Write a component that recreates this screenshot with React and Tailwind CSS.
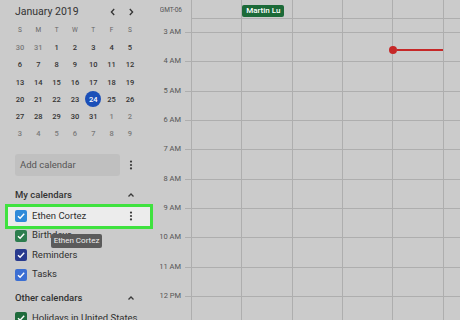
import React from 'react';

const font = { fontFamily: 'Roboto, "Noto Sans", sans-serif' };

const weeks = [
  [['30', 1], ['31', 1], ['1'], ['2'], ['3'], ['4'], ['5']],
  [['6'], ['7'], ['8'], ['9'], ['10'], ['11'], ['12']],
  [['13'], ['14'], ['15'], ['16'], ['17'], ['18'], ['19']],
  [['20'], ['21'], ['22'], ['23'], ['24', 0, 1], ['25'], ['26']],
  [['27'], ['28'], ['29'], ['30'], ['31'], ['1', 1], ['2', 1]],
  [['3', 1], ['4', 1], ['5', 1], ['6', 1], ['7', 1], ['8', 1], ['9', 1]],
];

const hours = ['3 AM', '4 AM', '5 AM', '6 AM', '7 AM', '8 AM', '9 AM', '10 AM', '11 AM', '12 PM', ''];

function Kebab() {
  return (
    <svg width="10" height="10" viewBox="0 0 10 10" className="text-[#3a3a3a]">
      <circle cx="5" cy="1.6" r="1.1" fill="currentColor" />
      <circle cx="5" cy="5" r="1.1" fill="currentColor" />
      <circle cx="5" cy="8.4" r="1.1" fill="currentColor" />
    </svg>
  );
}

function ChevronUp() {
  return (
    <svg width="10" height="10" viewBox="0 0 10 10">
      <path d="M2.5 6.5 L5 4 L7.5 6.5" fill="none" stroke="#3a3a3a" strokeWidth="1.3" />
    </svg>
  );
}

function Check({ color }) {
  return (
    <div className={`w-[12px] h-[12px] shrink-0 rounded-[2px] flex items-center justify-center ${color}`}>
      <svg width="10" height="10" viewBox="0 0 10 10">
        <path d="M2 5.2 L4.1 7.2 L8.2 2.8" fill="none" stroke="white" strokeWidth="1.4" />
      </svg>
    </div>
  );
}

function CalRow({ color, label, className = '', children }) {
  return (
    <div className={`relative h-[19.5px] shrink-0 flex items-center ml-[15px] w-[121px] justify-between ${className}`}>
      {children}
      <div className="relative flex items-center gap-[5px]">
        <Check color={color} />
        <span className="text-[9.5px] text-[#2f2f2f] whitespace-nowrap">{label}</span>
      </div>
    </div>
  );
}

function Sidebar() {
  return (
    <div className="w-[160px] shrink-0 flex flex-col">
      <div className="h-[22px] shrink-0 flex items-center pl-[15px] pt-[1px]">
        <span className="text-[10.5px] text-[#333]">January 2019</span>
        <div className="ml-auto mr-[24px] flex gap-[8px]">
          <svg width="10" height="10" viewBox="0 0 10 10">
            <path d="M6.2 2 L3.4 5 L6.2 8" fill="none" stroke="#333" strokeWidth="1.3" />
          </svg>
          <svg width="10" height="10" viewBox="0 0 10 10">
            <path d="M3.8 2 L6.6 5 L3.8 8" fill="none" stroke="#333" strokeWidth="1.3" />
          </svg>
        </div>
      </div>
      <div className="shrink-0 ml-[10.8px] w-[128.3px] grid grid-cols-7">
        {['S', 'M', 'T', 'W', 'T', 'F', 'S'].map((d, i) => (
          <div key={i} className="h-[17.2px] flex items-center justify-center text-[6.5px] text-[#666]">
            {d}
          </div>
        ))}
        {weeks.flat().map(([n, dim, today], i) => (
          <div key={i} className="h-[17.2px] flex items-center justify-center">
            {today ? (
              <div className="w-[16px] h-[16px] rounded-full bg-[#1b4fb8] flex items-center justify-center text-[7.5px] font-medium text-white">
                {n}
              </div>
            ) : (
              <span className={`text-[7.5px] font-medium ${dim ? 'text-[#7a7a7a]' : 'text-[#333]'}`}>{n}</span>
            )}
          </div>
        ))}
      </div>
      <div className="shrink-0 mt-[12px] ml-[15px] w-[121px] flex items-center justify-between">
        <div className="w-[105px] h-[22px] rounded-[3px] bg-[#c0c0c0] flex items-center pl-[5px] text-[9.5px] text-[#555]">
          Add calendar
        </div>
        <Kebab />
      </div>
      <div className="shrink-0 mt-[9px] h-[20px] ml-[15px] w-[121px] flex items-center justify-between">
        <span className="text-[9.5px] font-medium text-[#333]">My calendars</span>
        <ChevronUp />
      </div>
      <div className="shrink-0 mt-[1px]">
        <CalRow color="bg-[#2f8ad9]" label="Ethen Cortez">
          <div className="absolute left-[-10px] right-[-17px] top-[-2.5px] bottom-[-3.5px] border-[3px] border-[#3fe23f] bg-[#ececec]" />
          <div className="relative ml-auto order-last">
            <Kebab />
          </div>
        </CalRow>
        <CalRow color="bg-[#2c7d4e]" label="Birthdays">
          <div className="absolute left-[36px] top-[8px] z-10 h-[14px] w-[51px] rounded-[2px] bg-[#5b5b5b] flex items-center justify-center text-[8px] text-[#eee] whitespace-nowrap">
            Ethen Cortez
          </div>
        </CalRow>
        <CalRow color="bg-[#283a8e]" label="Reminders" />
        <CalRow color="bg-[#3c6fd3]" label="Tasks" />
      </div>
      <div className="shrink-0 mt-[4px] h-[20px] ml-[15px] w-[121px] flex items-center justify-between">
        <span className="text-[9.5px] font-medium text-[#333]">Other calendars</span>
        <ChevronUp />
      </div>
      <CalRow color="bg-[#1f6b3c]" label="Holidays in United States" />
    </div>
  );
}

function Grid() {
  const cols = [0, 1, 2, 3, 4, 5];
  return (
    <div className="flex-1 flex flex-col overflow-hidden">
      <div className="h-[19px] flex shrink-0">
        <div className="w-[31px] shrink-0 flex items-center justify-end pr-[9px] pt-[3px] text-[6.5px] text-[#555] whitespace-nowrap">
          GMT-06
        </div>
        {cols.map((c) => (
          <div key={c} className="w-[50.33px] shrink-0 border-l border-b border-[#aeaeae] pt-[5px]">
            {c === 1 && (
              <div className="w-[42px] h-[12px] rounded-[2px] bg-[#1c6a38] flex items-center justify-center text-[8px] font-medium text-white whitespace-nowrap">
                Martin Lu
              </div>
            )}
          </div>
        ))}
      </div>
      <div className="h-[13px] flex shrink-0">
        <div className="w-[31px] shrink-0" />
        {cols.map((c) => (
          <div key={c} className="w-[50.33px] shrink-0 border-l border-[#aeaeae]" />
        ))}
      </div>
      {hours.map((h, r) => (
        <div key={r} className="h-[29.33px] flex shrink-0">
          <div className="w-[25px] shrink-0 flex items-start justify-end pr-[4px]">
            <span className="text-[7.5px] text-[#555] leading-none whitespace-nowrap -translate-y-1/2">{h}</span>
          </div>
          <div className="w-[6px] shrink-0 border-t border-[#aeaeae]" />
          {cols.map((c) => (
            <div key={c} className="relative w-[50.33px] shrink-0 border-l border-t border-[#aeaeae]">
              {r === 0 && c === 4 && (
                <div className="absolute left-[-4px] top-[13px] w-[55px] flex items-center">
                  <div className="w-[8px] h-[8px] rounded-full bg-[#c62828]" />
                  <div className="flex-1 h-[2px] bg-[#c62828]" />
                </div>
              )}
            </div>
          ))}
        </div>
      ))}
    </div>
  );
}

export default function App() {
  return (
    <div className="w-[460px] h-[320px] overflow-hidden flex bg-[#cbcbcb]" style={font}>
      <Sidebar />
      <Grid />
    </div>
  );
}
